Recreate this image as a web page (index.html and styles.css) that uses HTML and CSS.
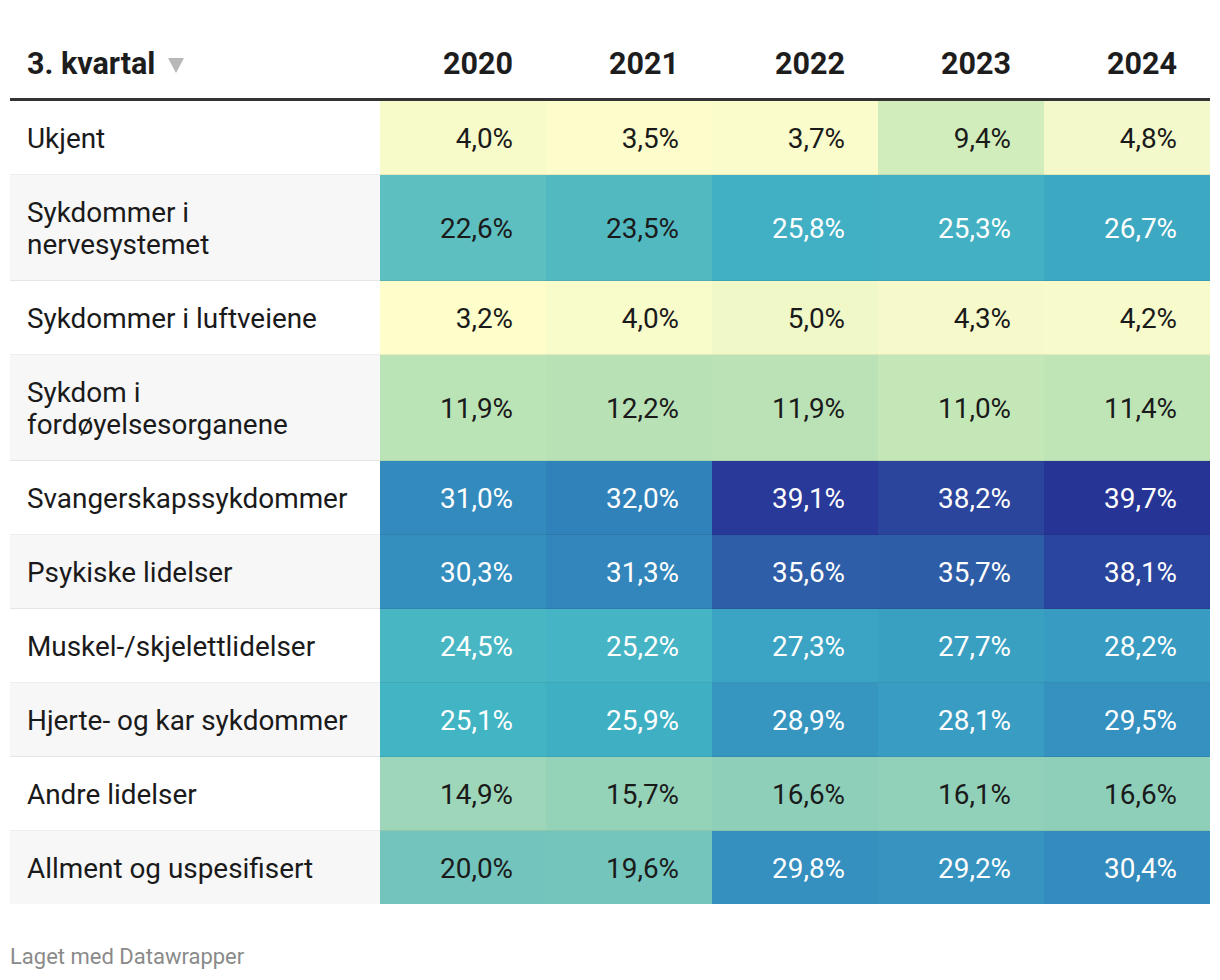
FILE: index.html
```html
<!DOCTYPE html>
<html lang="no">
<head>
<meta charset="utf-8">
<title>3. kvartal</title>
<link rel="stylesheet" href="styles.css">
</head>
<body>
<div class="chart">
  <table class="heat">
    <colgroup>
      <col class="c-label">
      <col class="c-val"><col class="c-val"><col class="c-val"><col class="c-val"><col class="c-val">
    </colgroup>
    <thead>
      <tr>
        <th class="h-label"><span>3. kvartal</span><svg class="sort" width="16" height="15" viewBox="0 0 16 15"><path d="M0 0H16L8 15Z" fill="#b8b8b8"/></svg></th>
        <th>2020</th><th>2021</th><th>2022</th><th>2023</th><th>2024</th>
      </tr>
    </thead>
    <tbody>
      <tr>
        <td class="label">Ukjent</td>
        <td style="background:#f7fbca">4,0%</td>
        <td style="background:#fdfdcb">3,5%</td>
        <td style="background:#fafccb">3,7%</td>
        <td style="background:#d1edbb">9,4%</td>
        <td style="background:#f3f9ca">4,8%</td>
      </tr>
      <tr>
        <td class="label">Sykdommer i<br>nervesystemet</td>
        <td style="background:#5dbfc0">22,6%</td>
        <td style="background:#53b9c1">23,5%</td>
        <td class="w" style="background:#42b0c4">25,8%</td>
        <td class="w" style="background:#43b1c3">25,3%</td>
        <td class="w" style="background:#3ca8c2">26,7%</td>
      </tr>
      <tr>
        <td class="label">Sykdommer i luftveiene</td>
        <td style="background:#fefecb">3,2%</td>
        <td style="background:#f8fbca">4,0%</td>
        <td style="background:#f0f8c8">5,0%</td>
        <td style="background:#f6facb">4,3%</td>
        <td style="background:#f7facb">4,2%</td>
      </tr>
      <tr>
        <td class="label">Sykdom i<br>fordøyelsesorganene</td>
        <td style="background:#bae3b6">11,9%</td>
        <td style="background:#b8e1b5">12,2%</td>
        <td style="background:#bae2b6">11,9%</td>
        <td style="background:#c4e7b7">11,0%</td>
        <td style="background:#bfe5b6">11,4%</td>
      </tr>
      <tr>
        <td class="label">Svangerskapssykdommer</td>
        <td class="w" style="background:#338bbd">31,0%</td>
        <td class="w" style="background:#3082ba">32,0%</td>
        <td class="w" style="background:#283999">39,1%</td>
        <td class="w" style="background:#2b449c">38,2%</td>
        <td class="w" style="background:#263595">39,7%</td>
      </tr>
      <tr>
        <td class="label">Psykiske lidelser</td>
        <td class="w" style="background:#348ebe">30,3%</td>
        <td class="w" style="background:#3286bb">31,3%</td>
        <td class="w" style="background:#2e5ea8">35,6%</td>
        <td class="w" style="background:#2e5da7">35,7%</td>
        <td class="w" style="background:#2a459d">38,1%</td>
      </tr>
      <tr>
        <td class="label">Muskel-/skjelettlidelser</td>
        <td class="w" style="background:#48b7c3">24,5%</td>
        <td class="w" style="background:#45b4c4">25,2%</td>
        <td class="w" style="background:#3ba3c3">27,3%</td>
        <td class="w" style="background:#3aa0c2">27,7%</td>
        <td class="w" style="background:#389bc1">28,2%</td>
      </tr>
      <tr>
        <td class="label">Hjerte- og kar sykdommer</td>
        <td class="w" style="background:#42b5c4">25,1%</td>
        <td class="w" style="background:#3fb0c4">25,9%</td>
        <td class="w" style="background:#3796c0">28,9%</td>
        <td class="w" style="background:#399cc2">28,1%</td>
        <td class="w" style="background:#3591bf">29,5%</td>
      </tr>
      <tr>
        <td class="label">Andre lidelser</td>
        <td style="background:#9dd6b8">14,9%</td>
        <td style="background:#95d3b9">15,7%</td>
        <td style="background:#8ecfba">16,6%</td>
        <td style="background:#91d1b9">16,1%</td>
        <td style="background:#8ecfba">16,6%</td>
      </tr>
      <tr>
        <td class="label">Allment og uspesifisert</td>
        <td style="background:#72c4bd">20,0%</td>
        <td style="background:#74c5bc">19,6%</td>
        <td class="w" style="background:#358fbf">29,8%</td>
        <td class="w" style="background:#3794c0">29,2%</td>
        <td class="w" style="background:#348bbe">30,4%</td>
      </tr>
    </tbody>
  </table>
  <div class="footer">Laget med Datawrapper</div>
</div>
</body>
</html>
```
FILE: styles.css
```css
html, body {
  margin: 0;
  padding: 0;
  background: #ffffff;
}
body {
  padding: 10px;
  font-family: Roboto, "Liberation Sans", Arial, sans-serif;
  color: #1d1d1d;
}
.chart {
  width: 1200px;
}
.heat {
  width: 1200px;
  border-collapse: collapse;
  table-layout: fixed;
}
.c-label { width: 370px; }
.c-val { width: 166px; }

.heat th {
  font-weight: 700;
  font-size: 30.5px;
  line-height: 36px;
  text-align: right;
  padding: 36px 33px 16px 0;
  border-bottom: 3px solid #333333;
  color: #1d1d1d;
  white-space: nowrap;
}
.heat th.h-label {
  text-align: left;
  padding-left: 17px;
}
.sort {
  margin-left: 13px;
  vertical-align: 1px;
}
.heat td {
  font-size: 27.9px;
  line-height: 32px;
  padding: 22px 33px 19px 0;
  text-align: right;
  border-bottom: 1px solid rgba(0, 0, 0, 0.07);
  color: #1a1a1a;
}
.heat td.w {
  color: #ffffff;
}
.heat td.label {
  text-align: left;
  padding-left: 17px;
  padding-right: 10px;
  background: #ffffff;
}
.heat tbody tr:nth-child(even) td.label {
  background: #f7f7f7;
}
.heat tbody tr:last-child td {
  border-bottom: none;
}
.footer {
  margin-top: 40px;
  font-size: 22px;
  line-height: 26px;
  color: #8a8a8a;
}
```
